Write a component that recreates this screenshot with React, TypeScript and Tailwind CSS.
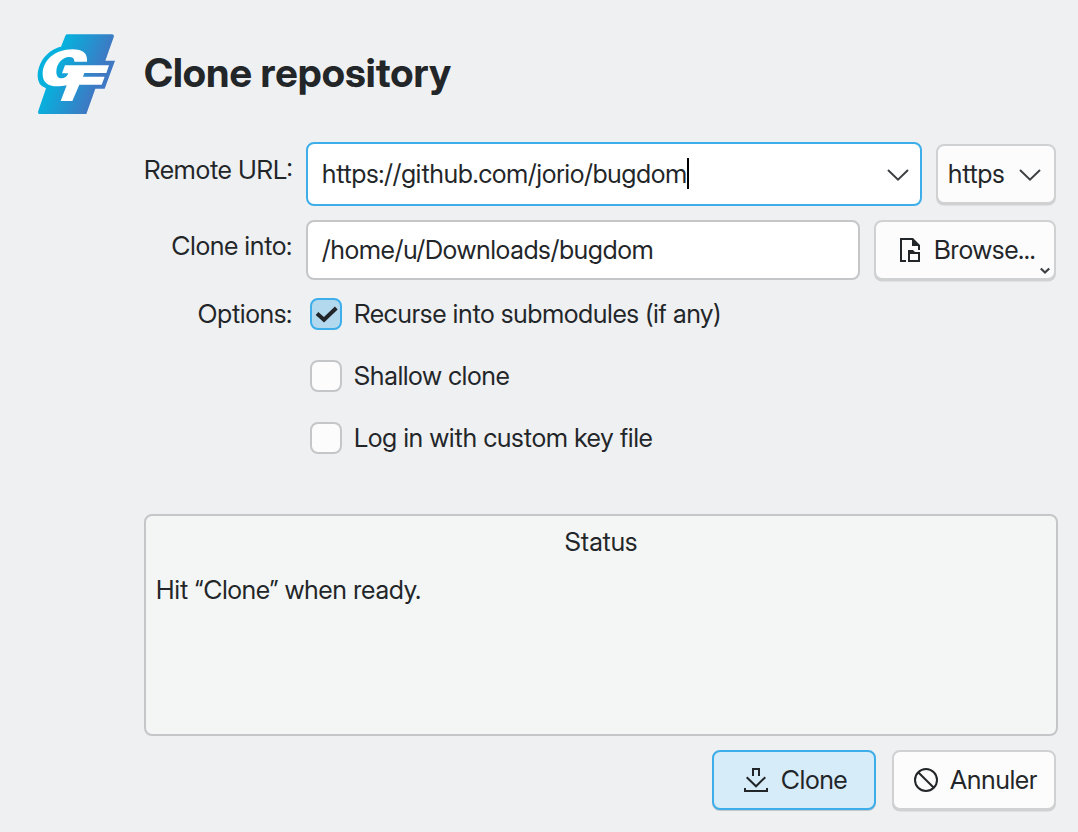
import type { ReactNode } from "react";

function Logo() {
  return (
    <svg className="block h-[100px] w-[100px]" viewBox="0 0 300 300">
      <defs>
        <linearGradient id="brand" gradientUnits="userSpaceOnUse" x1="90" y1="120" x2="220" y2="170">
          <stop offset="0" stopColor="#06b1dd" />
          <stop offset="1" stopColor="#3f78c3" />
        </linearGradient>
      </defs>
      <path
        fill="url(#brand)"
        d="M127 28H260Q269 28 266 37L241 107H270L239 191H211L184 267H45Q37 267 40 257L63 190Q38 182 38 154C38 110 70 73 108 65L121 32Q123 28 127 28Z"
      />
      <path
        fill="#fff"
        d="M186 110H148C148 100 143 96 133 96C111 96 94 118 94 140C94 153 100 160 110 160C119 160 126 155 130 145H111L120 121H252L244 144H178L174 155H239L230 179H163L142 228H107L125 181C74 191 53 176 53 147C53 107 89 73 142 73C174 73 188 85 186 110Z"
      />
    </svg>
  );
}

function Chevron() {
  return (
    <svg className="block h-[12px] w-[22px] shrink-0" viewBox="0 0 22 12" fill="none" stroke="#3d4043" strokeWidth="2">
      <path d="M1 1L11 10.6L21 1" />
    </svg>
  );
}

function Check({ label, checked = false }: { label: string; checked?: boolean }) {
  return (
    <div className="flex h-8 items-center gap-3">
      {checked ? (
        <span className="flex size-8 items-center justify-center rounded-[8px] border-2 border-[#3daee9] bg-[#b3d9ef]">
          <svg className="block size-[28px]" viewBox="0 0 28 28" fill="none" stroke="#232629" strokeWidth="4">
            <path d="M5 13.5L12 19.7L24.3 8" />
          </svg>
        </span>
      ) : (
        <span className="size-8 rounded-[8px] border-2 border-[#c5c6c7] bg-[#fcfcfc]" />
      )}
      <span>{label}</span>
    </div>
  );
}

function Button({ className, children }: { className: string; children: ReactNode }) {
  return (
    <button className={`flex items-center rounded-[8px] border-2 ${className}`}>
      {children}
    </button>
  );
}

const plain = "border-[#d0d1d2] bg-[#fcfcfc] shadow-[0_1.5px_0_#d0d1d2]";

export default function App() {
  return (
    <div className="flex h-[832px] w-[1078px] bg-[#eff0f2] font-['Inter_Display',Inter,sans-serif] text-[26px] leading-8 text-[#232629]">
      <div className="w-[144px] shrink-0 pt-[25px] pl-[25px]">
        <Logo />
      </div>
      <div className="w-[914px] shrink-0">
        <h1 className="h-[142px] pt-[49px] text-[40px] leading-[48px] font-bold">Clone repository</h1>

        <div className="flex h-16 w-[912px]">
          <div className="w-[148px] shrink-0 pt-3 text-right whitespace-nowrap">Remote URL:</div>
          <div className="ml-[14px] flex w-[616px] items-center rounded-[8px] border-2 border-[#3daee9] bg-white pr-[11px] pl-[14px]">
            <span>https://github.com/jorio/bugdom</span>
            <span className="mb-px h-[31px] w-[2px] bg-black" />
            <span className="mt-[2px] ml-auto">
              <Chevron />
            </span>
          </div>
          <Button className={`mt-0.5 ml-[14px] h-[60px] w-[120px] justify-between pr-[13px] pl-[10px] ${plain}`}>
            <span>https</span>
            <span className="mt-[2px]">
              <Chevron />
            </span>
          </Button>
        </div>

        <div className="mt-[14px] flex h-[60px] w-[912px]">
          <div className="w-[148px] shrink-0 pt-[10px] text-right">Clone into:</div>
          <div className="ml-[14px] flex w-[554px] items-center rounded-[8px] border-2 border-[#c5c6c7] bg-white pl-[14px]">
            /home/u/Downloads/bugdom
          </div>
          <Button className={`relative ml-[14px] h-[60px] w-[182px] pl-[24px] ${plain}`}>
            <svg className="mr-[14px] block h-6 w-[20px] shrink-0" viewBox="0 0 20 24" fill="#232629">
              <path d="M0 0H13L20 7V12H18V8H12V2H2V22H6V24H0Z" />
              <path fillRule="evenodd" d="M8 12H13L15 14H20V24H8ZM10 16V22H18V16Z" />
            </svg>
            <span>Browse...</span>
            <svg className="absolute right-[4px] bottom-[3px] h-[8px] w-[10px]" viewBox="0 0 10 8" fill="none" stroke="#3d4043" strokeWidth="2.2">
              <path d="M0.8 1.5L5 5.5L9.2 1.5" />
            </svg>
          </Button>
        </div>

        <div className="mt-[18px] flex h-[216px]">
          <div className="w-[148px] shrink-0 text-right">Options:</div>
          <div className="ml-[18px] flex flex-col gap-[30px]">
            <Check label="Recurse into submodules (if any)" checked />
            <Check label="Shallow clone" />
            <Check label="Log in with custom key file" />
          </div>
        </div>

        <div className="h-[222px] rounded-[8px] border-2 border-[#c5c6c7] bg-[#f4f6f5] px-[10px] pt-[10px]">
          <div className="text-center">Status</div>
          <div className="mt-4">Hit “Clone” when ready.</div>
        </div>

        <div className="mt-[14px] flex w-[912px] justify-end gap-4">
          <Button className="h-[60px] w-[164px] border-[#3daee9] bg-[#d6ecf8] pl-[30px] shadow-[0_1px_0_#c5c8ca]">
            <svg className="mr-[13px] block h-6 w-6" viewBox="0 0 24 24" fill="none" stroke="#232629" strokeWidth="2">
              <path d="M9 8V1H15V8M2.7 9.2L12 18.3L21.3 9.2M1 20V23H23V20" />
            </svg>
            <span>Clone</span>
          </Button>
          <Button className={`h-[60px] w-[164px] pl-[20px] ${plain}`}>
            <svg className="mr-[12px] block h-6 w-6" viewBox="0 0 24 24" fill="none" stroke="#232629" strokeWidth="2">
              <circle cx="12" cy="12" r="11" />
              <path d="M4.2 4.2L19.8 19.8" />
            </svg>
            <span>Annuler</span>
          </Button>
        </div>
      </div>
    </div>
  );
}
